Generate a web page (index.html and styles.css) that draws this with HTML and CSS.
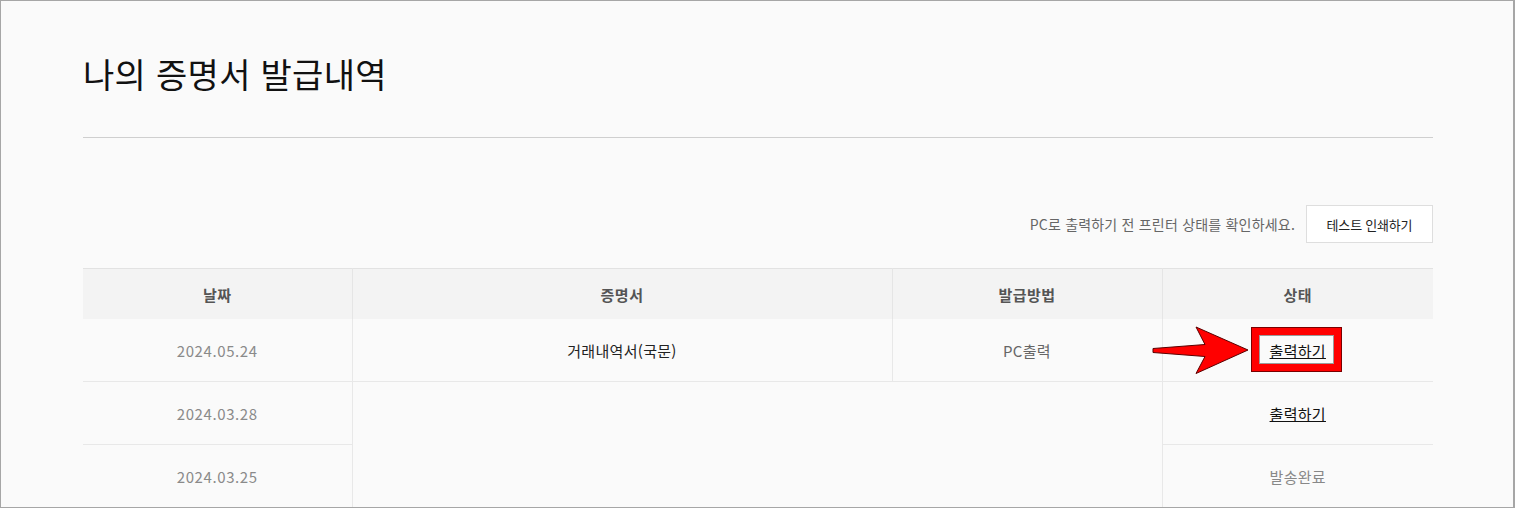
FILE: index.html
```html
<!DOCTYPE html>
<html lang="ko">
<head>
<meta charset="utf-8">
<title>나의 증명서 발급내역</title>
<link rel="stylesheet" href="styles.css">
</head>
<body>
<div class="frame">
  <div class="content">
    <h1 class="title">나의 증명서 발급내역</h1>
    <div class="notice-row">
      <p class="notice">PC로 출력하기 전 프린터 상태를 확인하세요.</p>
      <button class="test-btn" type="button">테스트 인쇄하기</button>
    </div>
    <table class="history">
      <colgroup>
        <col class="c-date">
        <col class="c-doc">
        <col class="c-method">
        <col class="c-status">
      </colgroup>
      <thead>
        <tr>
          <th>날짜</th>
          <th>증명서</th>
          <th>발급방법</th>
          <th>상태</th>
        </tr>
      </thead>
      <tbody>
        <tr>
          <td class="date">2024.05.24</td>
          <td class="doc">거래내역서(국문)</td>
          <td class="method">PC출력</td>
          <td class="status"><a href="#" class="print-link">출력하기</a></td>
        </tr>
        <tr>
          <td class="date">2024.03.28</td>
          <td class="merged" rowspan="2" colspan="2"></td>
          <td class="status"><a href="#" class="print-link">출력하기</a></td>
        </tr>
        <tr>
          <td class="date">2024.03.25</td>
          <td class="status done">발송완료</td>
        </tr>
      </tbody>
    </table>
  </div>
  <svg class="annotation" width="200" height="52" viewBox="1150 324 200 52" aria-hidden="true">
    <rect x="1255" y="331" width="83" height="37" fill="none" stroke="#ff0000" stroke-width="8"/>
    <rect x="1251.5" y="327.5" width="90" height="44" fill="none" stroke="#7a0000" stroke-width="1"/>
    <rect x="1259.5" y="335.5" width="74" height="28" fill="none" stroke="#9a9a9a" stroke-width="1"/>
    <polygon points="1153,348.5 1205,344.5 1196,327 1248,350 1196,373.5 1205,356.5 1153,352.5" fill="#ff0000" stroke="#5a0000" stroke-width="1" stroke-linejoin="miter"/>
  </svg>
</div>
</body>
</html>
```

FILE: styles.css
```css
html, body {
  margin: 0;
  padding: 0;
  background: #ffffff;
}

body {
  font-family: "Noto Sans CJK KR", "Noto Sans", sans-serif;
  color: #222;
}

.frame {
  position: relative;
  box-sizing: border-box;
  width: 1515px;
  height: 508px;
  border-top: 1px solid #a6a6a6;
  border-left: 1px solid #a6a6a6;
  border-right: 2px solid #a6a6a6;
  border-bottom: 1px solid #a6a6a6;
  background: #fafafa;
  overflow: hidden;
}

.content {
  width: 1350px;
  margin-left: 82px;
}

.title {
  margin: 51px 0 0;
  padding-bottom: 42px;
  font-size: 34px;
  font-weight: 400;
  line-height: 43px;
  letter-spacing: 0.3px;
  color: #111;
  border-bottom: 1px solid #cfcfcf;
}

.notice-row {
  display: flex;
  justify-content: flex-end;
  align-items: center;
  gap: 11px;
  margin-top: 67px;
}

.notice {
  margin: 0;
  font-size: 14px;
  letter-spacing: 0.2px;
  color: #666;
}

.test-btn {
  box-sizing: border-box;
  height: 38px;
  width: 127px;
  padding: 0;
  background: #fff;
  border: 1px solid #dedede;
  font-family: inherit;
  font-size: 13px;
  letter-spacing: -0.2px;
  color: #222;
}

.history {
  width: 1350px;
  margin-top: 25px;
  border-collapse: collapse;
  table-layout: fixed;
  border-top: 1px solid #e2e2e2;
}

.c-date { width: 269px; }
.c-doc { width: 540px; }
.c-method { width: 270px; }
.c-status { width: 271px; }

.history th {
  height: 50px;
  padding: 0;
  background: #f3f3f3;
  font-size: 15px;
  font-weight: 700;
  color: #555;
  letter-spacing: 0.5px;
  border-left: 1px solid #e5e5e5;
}

.history th:first-child {
  border-left: none;
}

.history td {
  height: 62px;
  padding: 0;
  text-align: center;
  font-size: 15px;
  border-bottom: 1px solid #e8e8e8;
  border-left: 1px solid #e8e8e8;
}

.history td.date {
  border-left: none;
  color: #8a8a8a;
  letter-spacing: 0.6px;
}

.history td.doc {
  color: #222;
  letter-spacing: 0.3px;
}

.history td.method {
  color: #666;
  letter-spacing: 0.3px;
}

.history td.merged {
  border-bottom: none;
}

.print-link {
  color: #111;
  text-decoration: underline;
  letter-spacing: 0.3px;
}

.history td.done {
  color: #888;
  letter-spacing: 0.3px;
}

.annotation {
  position: absolute;
  left: 1149px;
  top: 323px;
}
```
